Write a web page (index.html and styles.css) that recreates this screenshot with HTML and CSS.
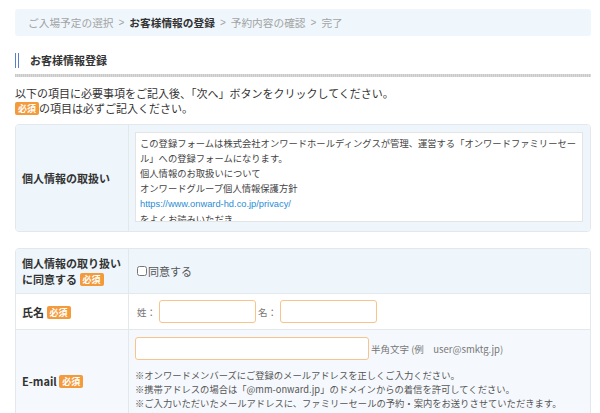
FILE: index.html
```html
<!DOCTYPE html>
<html lang="ja">
<head>
    <meta charset="UTF-8">
    <meta name="viewport" content="width=device-width, initial-scale=1.0">
    <title>お客様情報登録</title>
    <link rel="stylesheet" href="styles.css">
</head>
<body>
    <div class="page">
        <div class="steps">
            <span>ご入場予定の選択</span>
            <span class="sep">&gt;</span>
            <span class="current">お客様情報の登録</span>
            <span class="sep">&gt;</span>
            <span>予約内容の確認</span>
            <span class="sep">&gt;</span>
            <span>完了</span>
        </div>

        <h2 class="section-title"><span>お客様情報登録</span></h2>

        <p class="lead">以下の項目に必要事項をご記入後、「次へ」ボタンをクリックしてください。<br>
            <span class="badge">必須</span>の項目は必ずご記入ください。</p>

        <div class="form-table">
            <div class="row row-blue row-policy">
                <div class="label"><div>個人情報の取扱い</div></div>
                <div class="field">
                    <div class="policy">
                        この登録フォームは株式会社オンワードホールディングスが管理、運営する「オンワードファミリーセール」への登録フォームになります。<br>
                        個人情報のお取扱いについて<br>
                        オンワードグループ個人情報保護方針<br>
                        <a href="#">https://www.onward-hd.co.jp/privacy/</a><br>
                        をよくお読みいただき、
                    </div>
                </div>
            </div>
        </div>

        <div class="form-table">
            <div class="row row-blue row-consent">
                <div class="label"><div>個人情報の取り扱いに同意する <span class="badge">必須</span></div></div>
                <div class="field">
                    <label class="check"><input type="checkbox">同意する</label>
                </div>
            </div>
            <div class="row row-white row-name">
                <div class="label"><div>氏名 <span class="badge">必須</span></div></div>
                <div class="field name-field">
                    <span class="hint">姓：</span><input type="text" class="text-input short">
                    <span class="hint">名：</span><input type="text" class="text-input short">
                </div>
            </div>
            <div class="row row-pale row-mail">
                <div class="label"><div>E-mail <span class="badge">必須</span></div></div>
                <div class="field">
                    <div class="mail-line">
                        <input type="text" class="text-input wide">
                        <span class="hint">半角文字 (例　user@smktg.jp)</span>
                    </div>
                    <p class="notes">
                        ※オンワードメンバーズにご登録のメールアドレスを正しくご入力ください。<br>
                        ※携帯アドレスの場合は「@mm-onward.jp」のドメインからの着信を許可してください。<br>
                        ※ご入力いただいたメールアドレスに、ファミリーセールの予約・案内をお送りさせていただきます。<br>
                        ※ご入力いただいたメールアドレスは、ログインIDとして使用します。
                    </p>
                </div>
            </div>
        </div>
    </div>
</body>
</html>
```

FILE: styles.css
```css
html, body {
    margin: 0;
    overflow: hidden;
}

body {
    font-family: "Noto Sans CJK JP", "Noto Sans", sans-serif;
    font-size: 11px;
    color: #444;
    background: #fff;
}

.page {
    padding: 9px 9px 0 15px;
}

.steps {
    background-color: #eff7fd;
    border-radius: 3px;
    height: 27px;
    display: flex;
    align-items: center;
    gap: 5px;
    padding-left: 13px;
    color: #a3a3a3;
    font-size: 10.7px;
}

.steps .sep {
    font-family: "Liberation Sans", sans-serif;
    font-size: 10px;
}

.steps .current {
    color: #333;
    font-weight: bold;
}

.section-title {
    margin: 17px 0 0;
    padding-bottom: 6px;
    font-size: 11px;
    line-height: 15px;
    color: #333;
}

.section-title span {
    display: block;
    border-left: 4px double #5b7ec9;
    padding-left: 11px;
}

.section-title::after {
    content: "";
    display: block;
    height: 3px;
    margin-top: 6px;
    background: repeating-linear-gradient(90deg, #c9c9c9 0 1px, #dadada 1px 2px);
}

.lead {
    margin: 3px 0 8px;
    line-height: 15px;
    color: #333;
}

.badge {
    display: inline-block;
    background-color: #f39a3b;
    color: #fff;
    font-size: 9px;
    font-weight: bold;
    line-height: 13px;
    padding: 0 3px;
    border-radius: 2px;
    vertical-align: 1px;
}

.form-table {
    border: 1px solid #e3e8ed;
    border-radius: 4px;
    overflow: hidden;
    margin-bottom: 16px;
}

.row {
    display: grid;
    grid-template-columns: 113px 1fr;
    border-top: 1px solid #e3e8ed;
}

.row:first-child {
    border-top: none;
}

.row-blue {
    background-color: #eef6fc;
}

.row-white {
    background-color: #fff;
}

.row-pale {
    background-color: #f5f9fd;
}

.label {
    display: flex;
    align-items: center;
    padding: 0 4px 0 6px;
    font-weight: bold;
    color: #333;
    border-right: 1px solid #e3e8ed;
    line-height: 16px;
}

.field {
    padding: 7px 7px 9px 6px;
}

.policy {
    background: #fff;
    border: 1px solid #e4e4e4;
    box-sizing: border-box;
    height: 90px;
    overflow: hidden;
    padding: 3px 4px 0;
    font-size: 9.3px;
    line-height: 15px;
    color: #444;
}

.policy a {
    color: #2a8dd4;
    text-decoration: none;
    font-family: "Liberation Sans", sans-serif;
}

.row-consent {
    height: 44px;
}

.row-consent .field {
    display: flex;
    align-items: center;
    padding: 0 7px;
}

.check {
    display: flex;
    align-items: center;
    color: #555;
    font-size: 11px;
}

.check input {
    margin: 0 1px 0 1px;
    width: 10px;
    height: 10px;
}

.row-name {
    height: 35px;
}

.name-field {
    display: flex;
    align-items: center;
    padding: 0 8px;
}

.hint {
    color: #777;
    font-size: 9.5px;
}

.name-field .hint {
    width: 22px;
}

.text-input {
    height: 23px;
    box-sizing: border-box;
    border: 1px solid #f7c48c;
    border-radius: 3px;
    background: #fff;
    margin: 0 2px 0 0;
}

.short {
    width: 97px;
}

.wide {
    width: 234px;
    margin-right: 2px;
}

.mail-line {
    display: flex;
    align-items: center;
}

.row-mail .field {
    padding: 7px 7px 8px 6px;
}

.notes {
    margin: 8px 0 0;
    font-size: 9.3px;
    line-height: 14px;
    color: #555;
}
```
